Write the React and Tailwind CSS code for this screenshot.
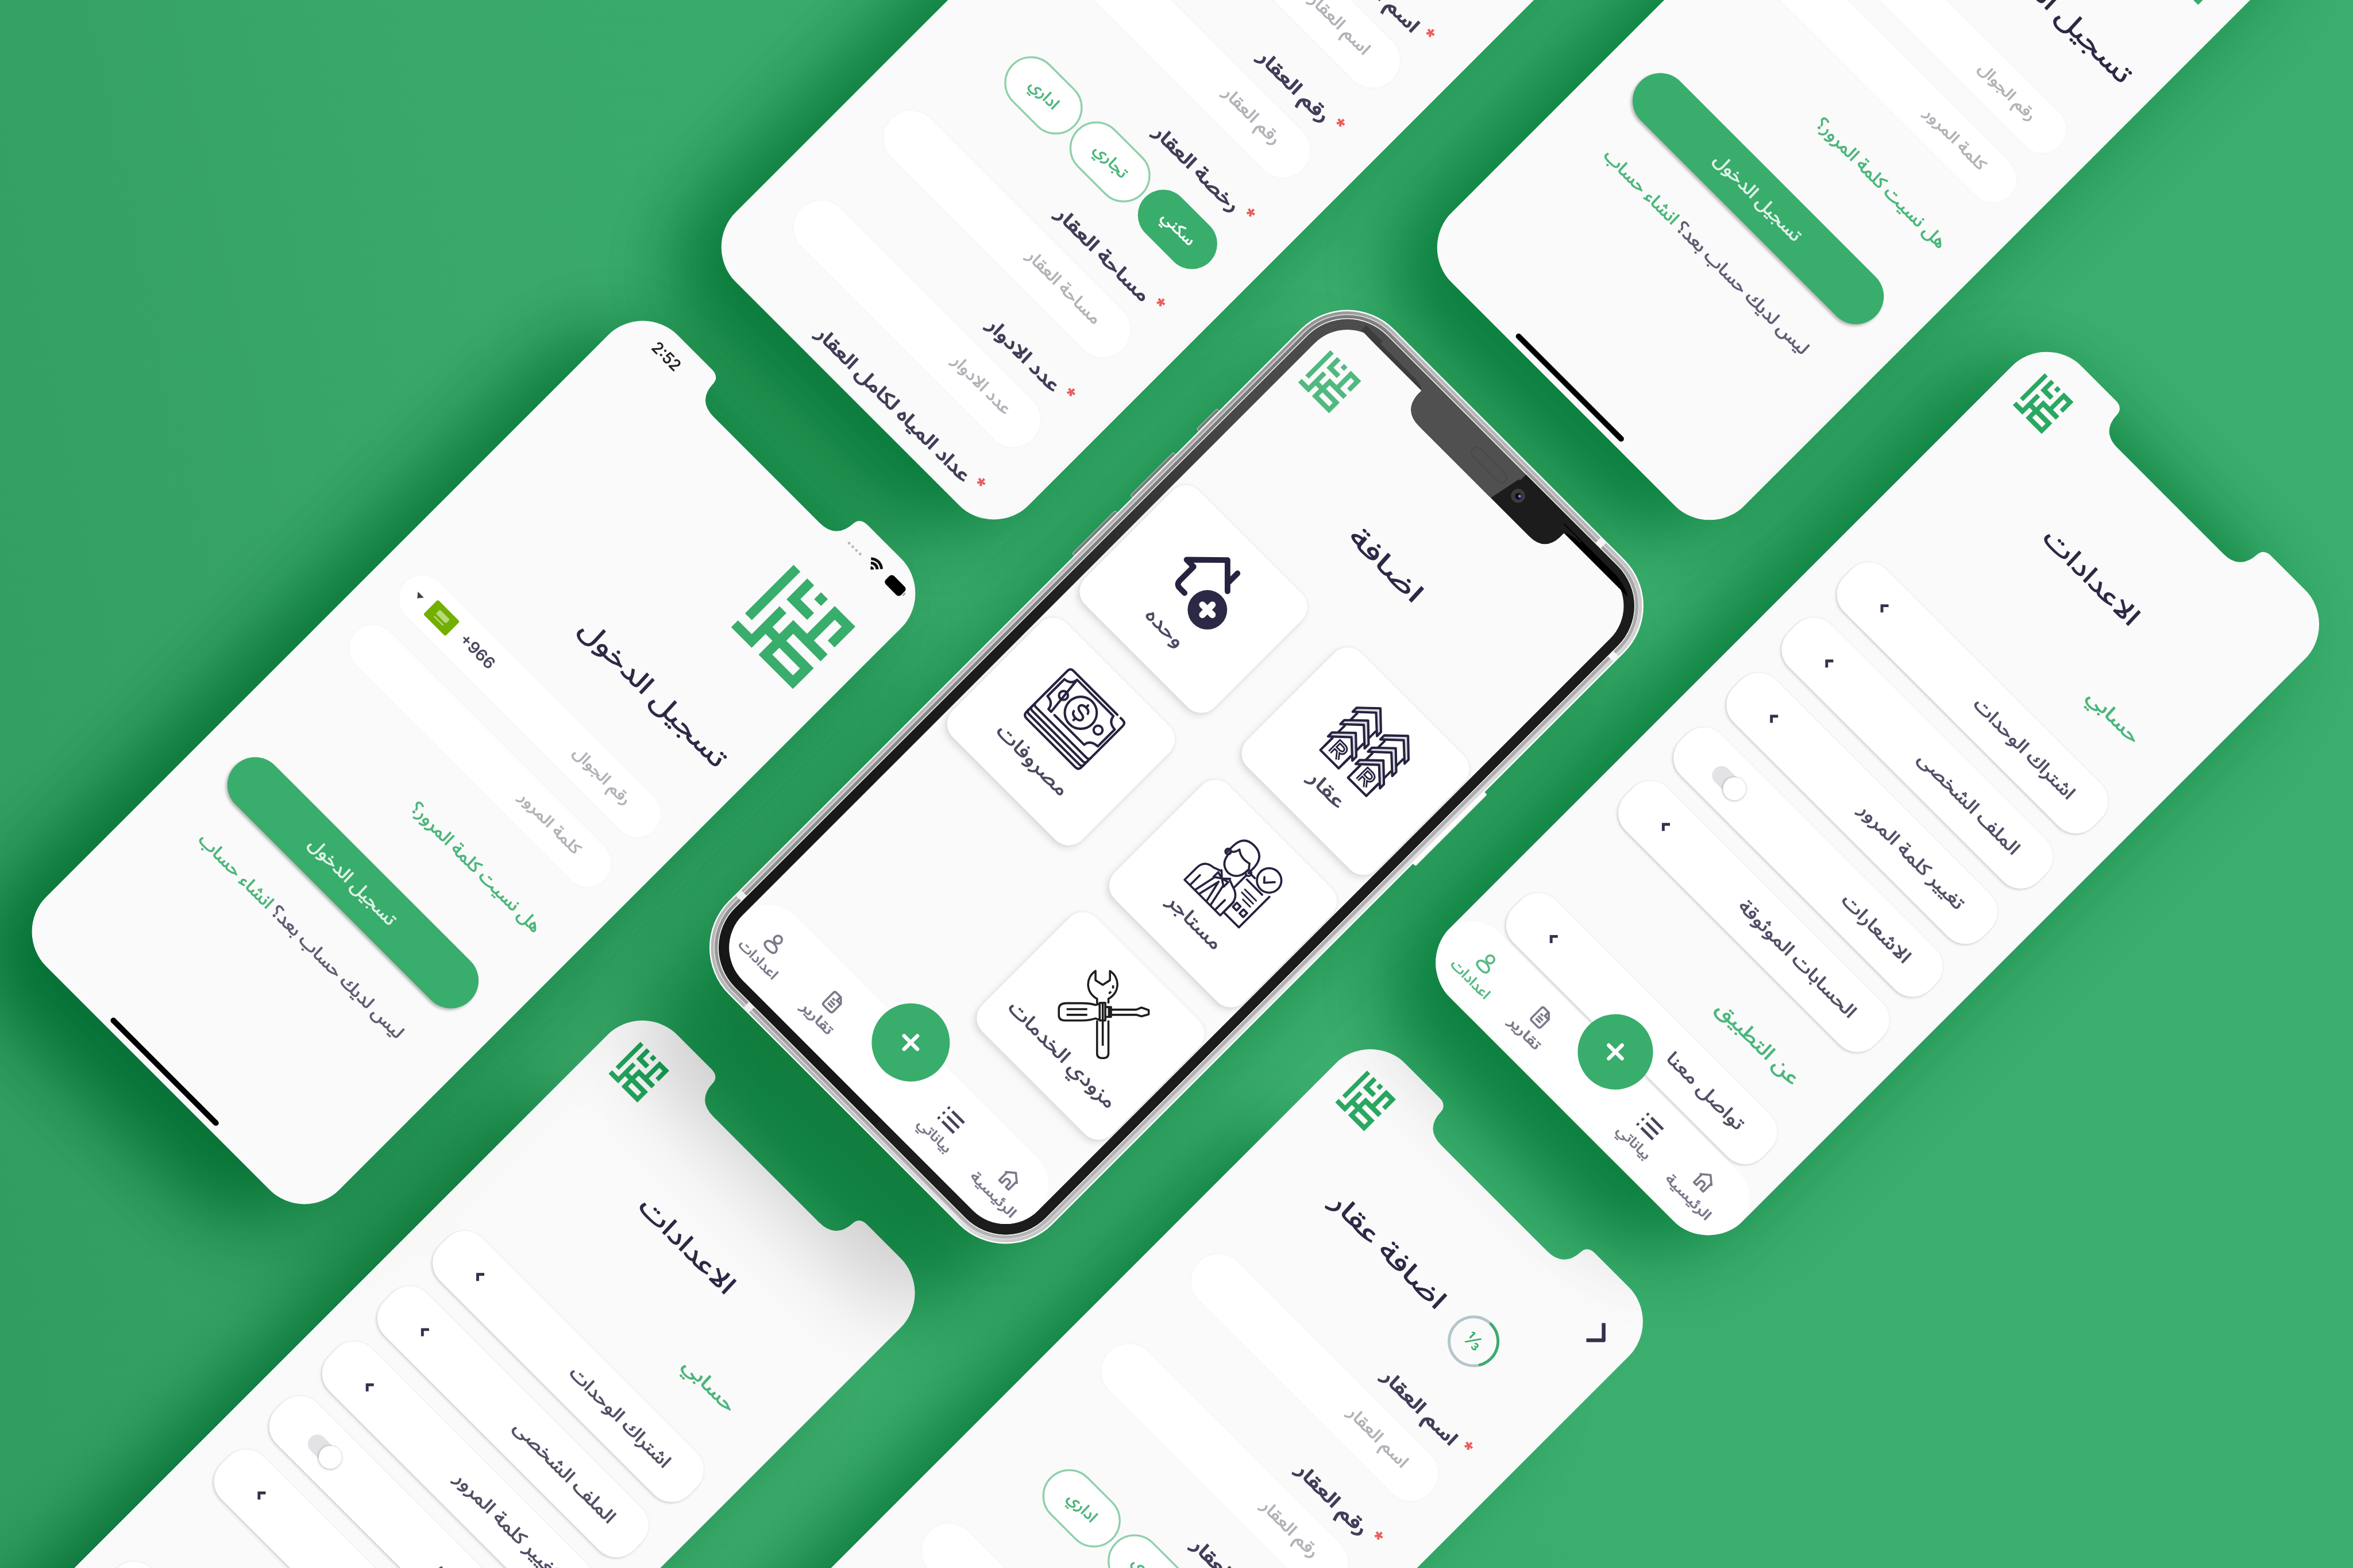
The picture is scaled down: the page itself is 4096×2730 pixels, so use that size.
import { useLayoutEffect, useRef, useState } from 'react';

const NAVY = '#25233f';

/* Arabic text squeezed or stretched to a given line width. */
function T({ w, className = '', children, rtl = true }) {
  const ref = useRef(null);
  const [k, setK] = useState(1);
  useLayoutEffect(() => {
    const measure = () => {
      if (ref.current && ref.current.offsetWidth) setK(w / ref.current.offsetWidth);
    };
    measure();
    if (document.fonts && document.fonts.ready) document.fonts.ready.then(measure);
  }, [w, children]);
  return (
    <span dir={rtl ? 'rtl' : 'ltr'} className="flex shrink-0" style={{ width: w }}>
      <span
        ref={ref}
        className={`inline-block shrink-0 whitespace-nowrap leading-none ${
          rtl ? 'origin-right [-webkit-text-stroke:1.2px]' : 'origin-left'
        } ${className}`}
        style={{ transform: `scaleX(${k})` }}
      >
        {children}
      </span>
    </span>
  );
}

function Logo({ className = '' }) {
  return (
    <svg viewBox="0 0 9 9" preserveAspectRatio="none" fill="currentColor" fillRule="evenodd" className={className}>
      <path d="M0 0H1V7H0ZM2 0H3V2H5V3H2ZM4 0H5V1H4ZM6 0H9V3H8V1H7V4H9V5H5V6H9V9H4V7H3V9H0V8H2V4H3V6H4V4H6ZM5 7H8V8H5Z" />
    </svg>
  );
}

const BODY =
  "absolute w-[881px] h-[1898px] origin-top-left rotate-45 bg-[#fafafa] flex flex-col [clip-path:path('M106_0H206Q229_0_231_18Q232_69_282_69H600Q650_69_652_18Q654_0_677_0H775A106_106_0_0_1_881_106V1792A106_106_0_0_1_775_1898H106A106_106_0_0_1_0_1792V106A106_106_0_0_1_106_0Z')]";

/* ---------- Login ---------- */
function Login({ pos }) {
  return (
    <section className={`${BODY} ${pos}`}>
      <div className="flex h-[98px] items-center justify-between pl-[84px] pr-[45px]">
        <T w={72} rtl={false} className="font-['Inter'] text-[34px] font-semibold text-[#222]">2:52</T>
        <div className="flex items-center">
          <div className="mr-[16px] mt-[12px] flex gap-[5px]">
            {[0, 1, 2, 3].map((i) => (
              <i key={i} className="size-[6px] rounded-full bg-[#bbb]" />
            ))}
          </div>
          <svg viewBox="0 0 34 26" className="mr-[18px] h-[29px] w-[40px]" fill="none" stroke="#111" strokeWidth="5.5">
            <path d="M3 9.500A20 20 0 0 1 31 9.500M8.500 15.500A12 12 0 0 1 25.500 15.500" />
            <path d="M17 25L12.500 20A6.500 6.500 0 0 1 21.500 20Z" fill="#111" stroke="none" />
          </svg>
          <div className="flex items-center gap-[2px]">
            <i className="h-[25px] w-[46px] rounded-[7px] bg-black" />
            <i className="h-[9px] w-[3px] rounded-r-full bg-[#999]" />
          </div>
        </div>
      </div>
      <Logo className="ml-[624px] mt-[73px] h-[188px] w-[186px] shrink-0 text-[#39ad6c]" />
      <div className="mt-[177px] flex h-[80px] items-center justify-end pr-[66px]">
        <T w={416} className="text-[56px] text-[#2b2945]">تسجيل الدخول</T>
      </div>
      <div className="mx-[68px] mt-[114px] flex h-[100px] shrink-0 items-center rounded-full bg-white pl-[32px] pr-[80px] shadow-[0_0_6px_rgba(0,0,0,0.03)]">
        <i className="mr-[24px] mt-[2px] size-0 border-x-[9px] border-t-[11px] border-x-transparent border-t-[#444]" />
        <span className="flex h-[44px] w-[66px] flex-col items-center justify-center gap-[5px] rounded-[4px] bg-[#73af00]">
          <i className="h-[12px] w-[30px] rounded-[3px] bg-[#b9d880]" />
          <i className="h-[3px] w-[28px] rounded-full bg-[#b9d880]" />
        </span>
        <span className="-mt-[8px] ml-[26px]">
          <T w={90} rtl={false} className="font-['Inter'] text-[34px] font-semibold text-[#4b495f]">+966</T>
        </span>
        <span className="-mt-[6px] ml-auto">
          <T w={158} className="text-[32px] text-[#b2b2b8]">رقم الجوال</T>
        </span>
      </div>
      <div className="mx-[68px] mt-[49px] flex h-[100px] shrink-0 items-center justify-end rounded-full bg-white pb-[6px] pr-[82px] shadow-[0_0_6px_rgba(0,0,0,0.03)]">
        <T w={170} className="text-[32px] text-[#b2b2b8]">كلمة المرور</T>
      </div>
      <div className="mt-[94px] flex h-[60px] items-center justify-end pr-[93px]">
        <T w={373} className="text-[37px] text-[#4cb67c]">هل نسيت كلمة المرور؟</T>
      </div>
      <div className="ml-[87px] mt-[119px] flex h-[118px] w-[706px] shrink-0 items-center justify-center rounded-full bg-[#39ad6c] pb-[2px] pr-[5px] shadow-[0_5px_7px_rgba(0,0,0,0.28)]">
        <T w={246} className="text-[37px] text-[#e0f3e8]">تسجيل الدخول</T>
      </div>
      <div dir="rtl" className="mt-[69px] flex h-[60px] items-center gap-[10px] pr-[140px]">
        <T w={380} className="text-[37px] text-[#605e74]">ليس لديك حساب بعد؟</T>
        <T w={208} className="text-[37px] text-[#4cb67c]">انشاء حساب</T>
      </div>
      <i className="mx-auto mt-[373px] h-[12px] w-[320px] shrink-0 rounded-full bg-black" />
    </section>
  );
}

/* ---------- Bottom navigation ---------- */
function NavItem({ icon, label, w, active }) {
  return (
    <div className={`flex flex-col items-center pt-[36px] ${active ? 'text-[#58bb85]' : 'text-[#7b7a8b]'}`}>
      {icon}
      <span className="mt-[9px]">
        <T w={w} className="text-[29px]">{label}</T>
      </span>
    </div>
  );
}

const navIcon = 'h-[50px] w-[50px]';
const navSvg = { viewBox: '0 0 50 50', fill: 'none', stroke: 'currentColor', strokeWidth: 4.5, className: navIcon };

function Nav({ active, pad, fab, h }) {
  return (
    <nav className={`relative grid shrink-0 grid-cols-5 rounded-t-[80px] bg-white ${h} ${pad}`}>
      <NavItem
        active={active}
        w={104}
        label="اعدادات"
        icon={
          <svg {...navSvg}>
            <circle cx="25" cy="14" r="8.500" />
            <path d="M25 26C15 26 10 31 10 36S15 44 25 44S40 41 40 36S35 26 25 26Z" />
          </svg>
        }
      />
      <NavItem
        w={84}
        label="تقارير"
        icon={
          <svg {...navSvg}>
            <path d="M13 6H29L39 16V39Q39 44 34 44H16Q11 44 11 39V10Q11 6 15 6ZM28 7V17H38M18 20H25M18 27H32M18 34H32" />
          </svg>
        }
      />
      <div className="flex justify-center">
        <div className={`flex shrink-0 items-center justify-center rounded-full bg-[#39ad6c] ${fab}`}>
          <svg viewBox="0 0 50 50" className="size-[50px]" stroke="#fff" strokeWidth="8" strokeLinecap="round">
            <path d="M25 5V45M5 25H45" />
          </svg>
        </div>
      </div>
      <NavItem
        w={88}
        label="بياناتي"
        icon={
          <svg viewBox="0 0 50 50" className={navIcon} stroke="#45435b" strokeWidth="6">
            <path d="M14 10H49M14 25H49M14 40H49M1 10H6M1 25H6M1 40H6" />
          </svg>
        }
      />
      <NavItem
        w={124}
        label="الرئيسية"
        icon={
          <svg {...navSvg} strokeLinejoin="round">
            <path d="M7 22L25 7L43 22M11 20V43H19V33Q19 28 25 28T31 33V43H39V20" />
          </svg>
        }
      />
    </nav>
  );
}

/* ---------- Settings ---------- */
function Row({ label, w, toggle, className = '' }) {
  return (
    <div
      className={`ml-[65px] mr-[67px] flex shrink-0 items-center justify-between rounded-[52px] bg-white pl-[94px] pr-[77px] shadow-[0_4px_5px_rgba(0,0,0,0.13),0_0_5px_rgba(0,0,0,0.08)] ${className}`}
    >
      {toggle ? (
        <span className="flex h-[40px] w-[84px] items-center justify-end rounded-full bg-[#e3e3e6]">
          <i className="size-[49px] shrink-0 rounded-full bg-white shadow-[0_1px_5px_rgba(0,0,0,0.35)]" />
        </span>
      ) : (
        <svg viewBox="0 0 20 26" className="-mt-[6px] h-[26px] w-[20px]" fill="none" stroke="#33314b" strokeWidth="6">
          <path d="M16 3L6 13L16 23" />
        </svg>
      )}
      <span className="-mt-[4px]">
        <T w={w} className="text-[38px] text-[#525066]">{label}</T>
      </span>
    </div>
  );
}

function Settings({ pos }) {
  return (
    <section className={`${BODY} ${pos}`}>
      <Logo className="ml-[60px] mt-[66px] h-[96px] w-[87px] shrink-0 text-[#2aa862]" />
      <div className="mt-[106px] flex h-[70px] shrink-0 items-center justify-center pr-[6px]">
        <T w={264} className="text-[54px] text-[#2b2945]">الاعدادات</T>
      </div>
      <div className="mt-[117px] flex h-[50px] shrink-0 items-center justify-end pr-[131px]">
        <T w={140} className="text-[40px] text-[#4cb67c]">حسابي</T>
      </div>
      <Row className="mt-[94px] h-[127px]" w={286} label="اشتراك الوحدات" />
      <Row className="mt-[39px] h-[127px]" w={288} label="الملف الشخصى" />
      <Row className="mt-[39px] h-[127px]" w={300} label="تغيير كلمة المرور" />
      <Row className="mt-[37px] h-[122px]" w={190} label="الاشعارات" toggle />
      <Row className="mt-[39px] h-[127px]" w={336} label="الحسابات الموثوقة" />
      <div className="mt-[96px] flex h-[50px] shrink-0 items-center justify-end pr-[130px]">
        <T w={230} className="text-[42px] text-[#4cb67c]">عن التطبيق</T>
      </div>
      <Row className="mt-[64px] h-[127px]" w={216} label="تواصل معنا" />
      <Nav active h="mt-[7px] h-[172px]" pad="pl-[26px] pr-[36px] pt-[3px]" fab="size-[160px] -mt-[79px]" />
    </section>
  );
}

/* ---------- Property form ---------- */
function Label({ w, children, className = '' }) {
  return (
    <div dir="rtl" className={`flex h-[60px] shrink-0 items-center gap-[20px] pr-[97px] ${className}`}>
      <span className="-mt-[24px] w-[16px] text-center text-[34px] leading-[30px] text-[#ee5b5b] [-webkit-text-stroke:2px]">*</span>
      <span className="-mt-[6px]">
        <T w={w} className="text-[39px] text-[#403e58] [-webkit-text-stroke:2px]">{children}</T>
      </span>
    </div>
  );
}

function Field({ w, children }) {
  return (
    <div className="mx-[94px] mt-[22px] flex h-[116px] shrink-0 items-center justify-end rounded-full bg-white pb-[10px] pr-[78px] shadow-[0_0_6px_rgba(0,0,0,0.04)]">
      <T w={w} className="text-[35px] text-[#b2b2b8]">{children}</T>
    </div>
  );
}

function Chip({ w, on, children, className = '' }) {
  return (
    <span
      className={`flex shrink-0 items-center justify-center rounded-full pb-[6px] ${
        on ? 'bg-[#39ad6c] text-white' : 'border-4 border-[#8dd0aa] bg-white text-[#4cb67c]'
      } ${className}`}
    >
      <T w={w} className="text-[33px]">{children}</T>
    </span>
  );
}

function Property({ pos }) {
  return (
    <section className={`${BODY} ${pos}`}>
      <div className="flex h-[164px] shrink-0 items-start justify-between pl-[58px] pr-[58px] pt-[68px]">
        <Logo className="h-[96px] w-[87px] text-[#2aa862]" />
        <svg viewBox="0 0 34 60" className="mt-[20px] h-[60px] w-[34px]" fill="none" stroke="#33314b" strokeWidth="8">
          <path d="M4 4L30 30L4 56" />
        </svg>
      </div>
      <div className="mt-[95px] flex h-[112px] shrink-0 items-center pl-[201px]">
        <span className="-mt-[14px]">
          <T w={321} className="text-[54px] text-[#2b2945]">اضافة عقار</T>
        </span>
        <div className="relative ml-[47px] flex size-[112px] items-center justify-center">
          <svg viewBox="0 0 112 112" className="absolute inset-0" fill="none" strokeWidth="6">
            <circle cx="56" cy="56" r="52" stroke="#b4c6ca" />
            <path d="M56 4A52 52 0 0 1 101 82" stroke="#39ad6c" strokeLinecap="round" />
          </svg>
          <span className="font-['Inter'] text-[40px] font-semibold leading-none text-[#39ad6c]">⅓</span>
        </div>
      </div>
      <Label w={208} className="mt-[97px]">اسم العقار</Label>
      <Field w={166}>اسم العقار</Field>
      <Label w={196} className="mt-[72px]">رقم العقار</Label>
      <Field w={156}>رقم العقار</Field>
      <Label w={240} className="mt-[72px]">رخصة العقار</Label>
      <div dir="rtl" className="mt-[30px] flex shrink-0 items-center gap-[8px] pr-[94px]">
        <Chip on w={86} className="h-[108px] w-[194px]">سكني</Chip>
        <Chip w={87} className="h-[114px] w-[196px]">تجاري</Chip>
        <Chip w={74} className="h-[114px] w-[188px]">اداري</Chip>
      </div>
      <Label w={264} className="mt-[66px]">مساحة العقار</Label>
      <Field w={206}>مساحة العقار</Field>
      <Label w={200} className="mt-[72px]">عدد الادوار</Label>
      <Field w={160}>عدد الادوار</Field>
      <Label w={444} className="mt-[72px]">عداد المياه لكامل العقار</Label>
    </section>
  );
}

/* ---------- Framed phone ---------- */
function Card({ vb, label, w, children, className = '' }) {
  return (
    <div
      className={`flex h-[342px] flex-col items-center rounded-[40px] bg-white shadow-[0_8px_14px_rgba(40,40,70,0.13),0_0_8px_rgba(40,40,70,0.07)] ${className}`}
    >
      <svg viewBox={vb} className="h-[222px] w-[389px] shrink-0" fill="none" stroke={NAVY} strokeWidth="5">
        {children}
      </svg>
      <span className="flex h-[72px] items-center">
        <T w={w} className="text-[40px] text-[#4b495f]">{label}</T>
      </span>
    </div>
  );
}

function RoofStack({ x }) {
  return (
    <g transform={`translate(${x} 0)`}>
      {[0, 37, 74].map((y) => (
        <g key={y} transform={`translate(0 ${y})`}>
          <path d="M620 587V612M675 587V612" />
          <path d="M611 581L647.500 546L684 581V593L647.500 559L611 593Z" fill="#dcdce4" strokeLinejoin="round" />
        </g>
      ))}
      <path d="M620 662V699H675V662" strokeLinejoin="round" />
      <path d="M637 688V657H650Q659 658 659 665T650 673H637M648 673L660 688" strokeWidth="9" />
      <path d="M637 688V657H650Q659 658 659 665T650 673H637M648 673L660 688" strokeWidth="2" stroke="#fff" />
    </g>
  );
}

function FramedPhone() {
  return (
    <div className="absolute left-[2863px] top-[660px] h-[1915px] w-[888px] origin-top-left rotate-45">
      {/* side buttons */}
      <i className="absolute -left-[49px] top-[343px] h-[62px] w-[10px] rounded-l-[4px] border border-[#eee] bg-[#7d7d7d]" />
      <i className="absolute -left-[49px] top-[474px] h-[130px] w-[10px] rounded-l-[4px] border border-[#eee] bg-[#7d7d7d]" />
      <i className="absolute -left-[49px] top-[649px] h-[130px] w-[10px] rounded-l-[4px] border border-[#eee] bg-[#7d7d7d]" />
      <i className="absolute -right-[50px] top-[517px] h-[216px] w-[10px] rounded-r-[4px] border border-[#ccc] bg-white" />
      {/* metal rim */}
      <div className="absolute -inset-[42px] rounded-[140px] bg-white" />
      <div className="absolute -inset-[39px] rounded-[137px] bg-[linear-gradient(100deg,#8d8d8d_0%,#b9b9b9_12%,#b5b5b5_55%,#e9e9e9_88%,#bdbdbd_100%)]" />
      <div className="absolute -inset-[33px] rounded-[131px] bg-[#dedede]" />
      <div className="absolute -inset-[31px] rounded-[129px] bg-[linear-gradient(100deg,#777_0%,#989898_30%,#b5b5b5_100%)]" />
      <div className="absolute -inset-[24px] rounded-[121px] bg-[#f4f4f4]" />
      {/* antenna breaks */}
      <i className="absolute -top-[41px] left-[722px] h-[18px] w-[16px] bg-[#f6f6f6]" />
      <i className="absolute -right-[41px] top-[112px] h-[16px] w-[18px] bg-[#f6f6f6]" />
      <i className="absolute -left-[41px] top-[1782px] h-[16px] w-[18px] bg-[#f0f0f0]" />
      <i className="absolute -bottom-[41px] left-[140px] h-[18px] w-[16px] bg-[#f0f0f0]" />
      {/* bezel */}
      <div className="absolute -inset-[22px] rounded-[119px] bg-[linear-gradient(180deg,#4d4d4d_0%,#484848_18%,#1d1d1d_48%,#161616_100%)]" />
      <div className="absolute -bottom-[22px] -right-[22px] -top-[22px] w-[395px] rounded-r-[119px] bg-[#1c1c1c]" />

      <div className="relative flex h-[1915px] w-[888px] flex-col overflow-hidden rounded-[98px] bg-[#fafafa]">
        <Logo className="ml-[34px] mt-[85px] h-[97px] w-[93px] shrink-0 text-[#50b97f]" />
        <div className="mt-[103px] flex h-[80px] shrink-0 items-center justify-center pr-[6px]">
          <T w={198} className="text-[54px] text-[#2b2945]">اضافة</T>
        </div>
        <div className="ml-[8px] mr-[4px] mt-[129px] grid grid-cols-[389px_389px] justify-between gap-y-[56px]">
          <Card vb="8 492 389 222" label="وحده" w={98}>
            <g strokeWidth="12" strokeLinecap="round" strokeLinejoin="round">
              <path d="M242 600L195 553L133 614H154V655Q154 667 166 667H180M230 586V558" />
            </g>
            <circle cx="239.500" cy="658" r="42" fill="#2b2945" stroke="none" />
            <path d="M239.500 643V673M224.500 658H254.500" stroke="#fff" strokeWidth="14" strokeLinecap="round" />
          </Card>
          <Card vb="495 492 389 222" label="عقار" w={92}>
            <RoofStack x={0} />
            <RoofStack x={83} />
          </Card>
          <Card vb="8 890 389 222" label="مصروفات" w={196}>
            <g strokeLinejoin="round" strokeLinecap="round">
              <path d="M262 951H130Q121 951 121 960V1083Q121 1093 131 1093H278Q287 1093 287 1083V960Q287 951 278 951H272" />
              <path d="M121 1056Q121 1062 128 1062H280Q287 1062 287 1056M121 1066Q121 1073 128 1073H280Q287 1073 287 1066M121 1076Q121 1083 128 1083H280Q287 1083 287 1076" />
              <path d="M149 959H258Q260 976 280 977V1028Q259 1029 257 1046H168M158 1046H150Q148 1029 129 1028V977Q147 976 149 959Z" />
              <circle cx="204" cy="1003" r="34" />
              <circle cx="152" cy="1003" r="9.500" />
              <circle cx="256" cy="1003" r="9.500" />
              <path d="M216 994Q214 987 204 987Q192 988 192 995T204 1003T216 1011T204 1019Q193 1019 191 1011M204 981V987M204 1019V1025" />
            </g>
          </Card>
          <Card vb="495 890 389 222" label="مستاجر" w={146}>
            <g strokeLinejoin="round" strokeLinecap="round" strokeWidth="4.500">
              <path d="M633 992V975Q633 942 664 942T697 975V992" />
              <path d="M638 986Q638 1020 665 1022Q692 1020 692 986L684 976Q662 982 648 970Q646 982 638 986Z" />
              <circle cx="634" cy="990" r="6" />
              <circle cx="697" cy="992" r="6" />
              <path d="M611 1098V1062Q611 1038 636 1036L652 1030M678 1030L694 1036Q716 1042 718 1062V1098H611" />
              <path d="M652 1028L665 1040L678 1028M665 1040L650 1050V1036ZM665 1040L680 1050V1036ZM652 1050L642 1097M678 1050L688 1097M665 1050L654 1097M665 1050L676 1097M627 1068V1097M702 1068V1097" />
              <path d="M700 990H714M697 1000V1034M764 996V1088H720M704 1004H750M718 1058V1088" />
              <path d="M716 1022H750M716 1031H750M728 1040H750" strokeWidth="3.500" />
              <path d="M724 1054H735V1066H724ZM744 1054H755V1066H744Z" />
              <circle cx="739" cy="972" r="26" />
              <path d="M727 974L735 983L750 966" />
            </g>
          </Card>
          <Card vb="495 1289 389 222" label="مزودي الخدمات" w={304} className="col-start-2">
            <g transform="translate(687 1421) rotate(-45) scale(0.5485)" stroke="#1e1e1e" strokeWidth="8" strokeLinejoin="round">
              <path d="M-22 -34V-52A62 62 0 0 1 -28 -160V-124L0 -106L28 -124V-160A62 62 0 0 1 22 -52V-34M-22 32V160Q-22 178 0 178T22 160V32M0 28V130" />
              <path d="M-12 -33L-28 -28Q-50 -35 -80 -35H-140Q-170 -35 -170 -12V12Q-170 32 -146 32H-80Q-50 32 -28 24L-12 30M-140 -12H-60M-140 10H-60M-12 -36H10V32H-12ZM0 -34V30M10 -20H32V18H10ZM32 -10H130L150 -18L178 -8V8L150 16L130 10H32M24 -18V16" />
              <path d="M40 -104V-92M32 -80L24 -72" />
            </g>
          </Card>
        </div>
        <Nav h="mt-[108px] h-[176px]" pad="pl-[2px] pr-[2px] pt-[11px]" fab="size-[166px] -mt-[78px]" />
      </div>

      <svg viewBox="0 0 889 130" className="absolute -top-[24px] left-0 h-[130px] w-[889px] overflow-visible">
        <g transform="translate(0 24)">
          <path d="M50 -6H240V9H95Q70 9 50 8Z" fill="#3c3c3c" />
          <path d="M645 -6H800Q830 -4 852 9H645Z" fill="#000" />
          <path d="M205 -4H700V-1Q668 0 660 10V22Q658 66 612 66H282Q236 66 232 22V10Q228 0 205 -1Z" fill="#1c1c1c" />
          <path d="M100 -21H515L497 66H282Q236 66 232 22V10Q228 2 205 0H100Z" fill="#505050" />
          <rect x="396" y="8" width="98" height="22" rx="11" fill="#505050" stroke="#474747" strokeWidth="2" />
          <circle cx="535" cy="22" r="15" fill="#3b3b3b" />
          <circle cx="536" cy="22" r="7" fill="#0a0d1c" />
          <circle cx="538" cy="20" r="3" fill="#6f8ce0" />
        </g>
      </svg>
    </div>
  );
}

/* Soft dark casts of a phone: a dense one down its long side, and a wide faint one. */
const CAST = 'absolute origin-top-left rotate-45 rounded-[160px] bg-[#2f2f2f] blur-[75px]';
const WIDE = 'absolute origin-top-left rotate-45 rounded-[200px] bg-[#2f2f2f] opacity-45 blur-[110px]';

export default function App() {
  return (
    <div className="h-[2730px] w-[4096px] overflow-hidden bg-[#3aad6d]">
      <div className="relative h-[3333px] w-[5000px] origin-top-left overflow-hidden bg-[linear-gradient(78deg,#329c60_0%,#39a869_28%,#3bae6e_60%)] font-['Noto_Sans_Arabic','DejaVu_Sans',sans-serif] [scale:0.8192]">
        <div className="absolute inset-0 mix-blend-difference">
          <i className={`${WIDE} left-[2745px] top-[-815px] h-[1960px] w-[940px]`} />
          <i className={`${WIDE} left-[4266px] top-[-814px] h-[1960px] w-[940px]`} />
          <i className={`${CAST} left-[2750px] top-[-800px] h-[1940px] w-[860px]`} />
          <i className={`${CAST} left-[4271px] top-[-799px] h-[1940px] w-[860px]`} />
          <i className={`${CAST} left-[1143px] top-[2283px] h-[1740px] w-[860px]`} />
          <i className={`${CAST} left-[2690px] top-[2344px] h-[1740px] w-[860px]`} />
        </div>
        <Property pos="left-[2831px] top-[-817px]" />
        <Login pos="left-[4352px] top-[-816px]" />
        <Settings pos="left-[1365px] top-[2125px]" />
        <Property pos="left-[2912px] top-[2186px]" />
        <div className="absolute inset-0 mix-blend-difference">
          <i className={`${WIDE} left-[1280px] top-[640px] h-[1960px] w-[1010px]`} />
          <i className={`${WIDE} left-[4263px] top-[706px] h-[1960px] w-[940px]`} />
          <i className={`${CAST} left-[1285px] top-[655px] h-[1940px] w-[860px]`} />
          <i className={`${CAST} left-[4268px] top-[721px] h-[1940px] w-[860px]`} />
          <i className="absolute left-[2770px] top-[720px] h-[2090px] w-[920px] origin-top-left rotate-45 rounded-[160px] bg-[#292929] blur-[85px]" />
        </div>
        <Login pos="left-[1366px] top-[638px]" />
        <div className="absolute inset-0 opacity-30 mix-blend-difference">
          <i className={`${WIDE} left-[2750px] top-[680px] h-[1850px] w-[960px]`} />
        </div>
        <Settings pos="left-[4349px] top-[704px]" />
        <FramedPhone />
      </div>
    </div>
  );
}
